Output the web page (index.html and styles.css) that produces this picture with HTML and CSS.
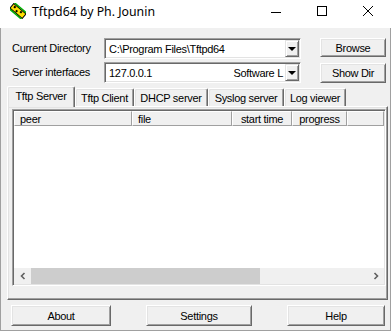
FILE: index.html
```html
<!DOCTYPE html>
<html lang="en">
<head>
  <meta charset="UTF-8">
  <title>Tftpd64 by Ph. Jounin</title>
  <link rel="stylesheet" href="styles.css">
</head>
<body>

  <!-- Title bar -->
  <div class="titlebar">
    <svg class="app-icon" width="16" height="16" viewBox="0 0 16 16">
      <g transform="rotate(40 8 8)">
        <rect x="0" y="5" width="16" height="6" fill="#ffe000" stroke="#000" stroke-width="1"/>
        <rect x="2" y="6" width="2" height="2" fill="#000"/>
        <rect x="6" y="8" width="2" height="2" fill="#000"/>
        <rect x="10" y="6" width="2" height="2" fill="#000"/>
        <line x1="0" y1="4" x2="16" y2="4" stroke="#00b000" stroke-width="1.5"/>
        <line x1="0" y1="12" x2="16" y2="12" stroke="#00b000" stroke-width="1.5"/>
      </g>
    </svg>
    <div class="title">Tftpd64 by Ph. Jounin</div>
    <div class="caption-btn">
      <svg width="10" height="10" viewBox="0 0 10 10"><line x1="0" y1="6.5" x2="10" y2="6.5" stroke="#000" stroke-width="1"/></svg>
    </div>
    <div class="caption-btn">
      <svg width="10" height="10" viewBox="0 0 10 10"><rect x="0.5" y="0.5" width="9" height="9" fill="none" stroke="#000" stroke-width="1"/></svg>
    </div>
    <div class="caption-btn">
      <svg width="10" height="10" viewBox="0 0 10 10"><path d="M0 0 L10 10 M10 0 L0 10" stroke="#000" stroke-width="1"/></svg>
    </div>
  </div>

  <div class="frame">
    <div class="client">

      <div class="row">
        <div class="label">Current Directory</div>
        <div class="combo">
          <div class="combo-text">C:\Program Files\Tftpd64</div>
          <div class="drop"><span class="arrow"></span></div>
        </div>
        <div class="btn btn-side">Browse</div>
      </div>

      <div class="row row-second">
        <div class="label">Server interfaces</div>
        <div class="combo">
          <div class="combo-text">127.0.0.1</div>
          <div class="combo-extra">Software L</div>
          <div class="drop"><span class="arrow"></span></div>
        </div>
        <div class="btn btn-side btn-low">Show Dir</div>
      </div>

      <!-- Tabs -->
      <div class="tabs">
        <div class="tab tab-active" style="width: 68px">Tftp Server</div>
        <div class="tab" style="width: 59px">Tftp Client</div>
        <div class="tab" style="width: 74px">DHCP server</div>
        <div class="tab" style="width: 76px">Syslog server</div>
        <div class="tab" style="width: 62px">Log viewer</div>
      </div>

      <div class="panel">
        <div class="listview">
          <div class="header">
            <div class="col col-left" style="width: 118px">peer</div>
            <div class="col col-left" style="width: 100px">file</div>
            <div class="col" style="width: 60px">start time</div>
            <div class="col" style="width: 55px">progress</div>
            <div class="col col-fill"></div>
          </div>
          <div class="list-body"></div>
          <div class="hscroll">
            <div class="sb-arrow">
              <svg width="8" height="8" viewBox="0 0 8 8"><path d="M5.5 1 L2.5 4 L5.5 7" fill="none" stroke="#606060" stroke-width="1.6"/></svg>
            </div>
            <div class="sb-thumb"></div>
            <div class="sb-track"></div>
            <div class="sb-arrow">
              <svg width="8" height="8" viewBox="0 0 8 8"><path d="M2.5 1 L5.5 4 L2.5 7" fill="none" stroke="#606060" stroke-width="1.6"/></svg>
            </div>
          </div>
        </div>
      </div>

      <!-- Bottom buttons -->
      <div class="bottom">
        <div class="btn" style="width: 100px">About</div>
        <div class="btn" style="width: 106px">Settings</div>
        <div class="btn" style="width: 98px">Help</div>
      </div>

    </div>
  </div>

</body>
</html>
```

FILE: styles.css
```css
body {
  margin: 0;
  background: #fff;
  font-family: "Liberation Sans", Arial, sans-serif;
  font-size: 11px;
  letter-spacing: -0.3px;
  color: #000;
}

/* Title bar */
.titlebar {
  width: 391px;
  height: 28px;
  background: #fff;
  display: flex;
  align-items: flex-start;
}

.app-icon {
  margin: 3px 0 0 10px;
}

.title {
  flex: 1;
  margin-left: 6px;
  margin-top: 3px;
  font-family: "Noto Sans", sans-serif;
  font-size: 12.3px;
  letter-spacing: 0;
  line-height: 17px;
}

.caption-btn {
  width: 46px;
  height: 21px;
  display: flex;
  align-items: center;
  justify-content: center;
}

/* Window frame */
.frame {
  width: 389px;
  height: 302px;
  border: 1px solid #a0a0a0;
  border-top: none;
  background: #f0f0f0;
}

.client {
  padding: 10px 0 0 6px;
}

.row {
  display: flex;
  align-items: flex-start;
  padding-left: 5px;
  height: 21px;
}

.row-second {
  margin-top: 3px;
}

.label {
  width: 92px;
  line-height: 21px;
}

/* Sunken combo box */
.combo {
  box-sizing: border-box;
  width: 197px;
  height: 21px;
  background: #fff;
  border-top: 1px solid #a0a0a0;
  border-left: 1px solid #a0a0a0;
  border-right: 1px solid #fff;
  border-bottom: 1px solid #fff;
  box-shadow: inset 1px 1px 0 #696969, inset -1px -1px 0 #e3e3e3;
  display: flex;
  align-items: center;
  padding: 1px;
}

.combo-text {
  flex: 1;
  padding-left: 3px;
  white-space: nowrap;
  overflow: hidden;
}

.combo-extra {
  padding-right: 2px;
  white-space: nowrap;
}

.drop {
  box-sizing: border-box;
  width: 14px;
  height: 17px;
  background: #f0f0f0;
  border-top: 1px solid #e3e3e3;
  border-left: 1px solid #e3e3e3;
  border-right: 1px solid #696969;
  border-bottom: 1px solid #696969;
  box-shadow: inset 1px 1px 0 #fff, inset -1px -1px 0 #a0a0a0;
  display: flex;
  align-items: center;
  justify-content: center;
}

.arrow {
  width: 0;
  height: 0;
  border-left: 4px solid transparent;
  border-right: 4px solid transparent;
  border-top: 4px solid #000;
  margin-top: 1px;
}

/* Raised push button */
.btn {
  box-sizing: border-box;
  height: 21px;
  background: #f0f0f0;
  border-top: 1px solid #fff;
  border-left: 1px solid #fff;
  border-right: 1px solid #696969;
  border-bottom: 1px solid #696969;
  box-shadow: inset 1px 1px 0 #e3e3e3, inset -1px -1px 0 #a0a0a0;
  display: flex;
  align-items: center;
  justify-content: center;
}

.btn-side {
  width: 66px;
  height: 19px;
  margin-left: 19px;
}

.btn-low {
  height: 20px;
  margin-top: 1px;
}

/* Tabs */
.tabs {
  display: flex;
  align-items: flex-end;
  height: 20px;
  margin-top: 3px;
  position: relative;
  z-index: 1;
}

.tab {
  box-sizing: border-box;
  height: 18px;
  border-top: 1px solid #fff;
  border-left: 1px solid #fff;
  border-right: 1px solid #696969;
  box-shadow: inset -1px 0 0 #a0a0a0, inset 1px 1px 0 #e3e3e3;
  display: flex;
  align-items: center;
  justify-content: center;
  background: #f0f0f0;
  white-space: nowrap;
  border-radius: 2px 2px 0 0;
}

.tab-active {
  height: 21px;
  margin-bottom: -1px;
  padding-bottom: 3px;
}

.panel {
  box-sizing: border-box;
  width: 381px;
  height: 194px;
  border-top: 1px solid #fff;
  border-left: 1px solid #fff;
  border-right: 1px solid #696969;
  border-bottom: 1px solid #696969;
  box-shadow: inset -1px -1px 0 #a0a0a0, inset 1px 1px 0 #e3e3e3;
  padding: 2px 0 0 4px;
}

/* List view */
.listview {
  box-sizing: border-box;
  width: 374px;
  height: 177px;
  background: #fff;
  border-top: 1px solid #a0a0a0;
  border-left: 1px solid #a0a0a0;
  border-right: 1px solid #fff;
  border-bottom: 1px solid #fff;
  box-shadow: inset 1px 1px 0 #696969, inset -1px -1px 0 #e3e3e3;
  padding: 1px;
  display: flex;
  flex-direction: column;
}

.header {
  display: flex;
  height: 15px;
  background: #f0f0f0;
}

.col {
  box-sizing: border-box;
  height: 15px;
  border-top: 1px solid #fff;
  border-left: 1px solid #fff;
  border-right: 1px solid #a0a0a0;
  border-bottom: 1px solid #a0a0a0;
  display: flex;
  align-items: center;
  justify-content: center;
  white-space: nowrap;
}

.col-left {
  justify-content: flex-start;
  padding-left: 5px;
}

.col-fill {
  flex: 1;
}

.list-body {
  flex: 1;
  background: #fff;
}

.hscroll {
  display: flex;
  height: 16px;
  background: #f0f0f0;
}

.sb-arrow {
  width: 17px;
  display: flex;
  align-items: center;
  justify-content: center;
}

.sb-thumb {
  width: 229px;
  background: #cdcdcd;
}

.sb-track {
  flex: 1;
}

/* Bottom buttons */
.bottom {
  display: flex;
  justify-content: space-between;
  width: 374px;
  padding-left: 4px;
  margin-top: 5px;
}
```
